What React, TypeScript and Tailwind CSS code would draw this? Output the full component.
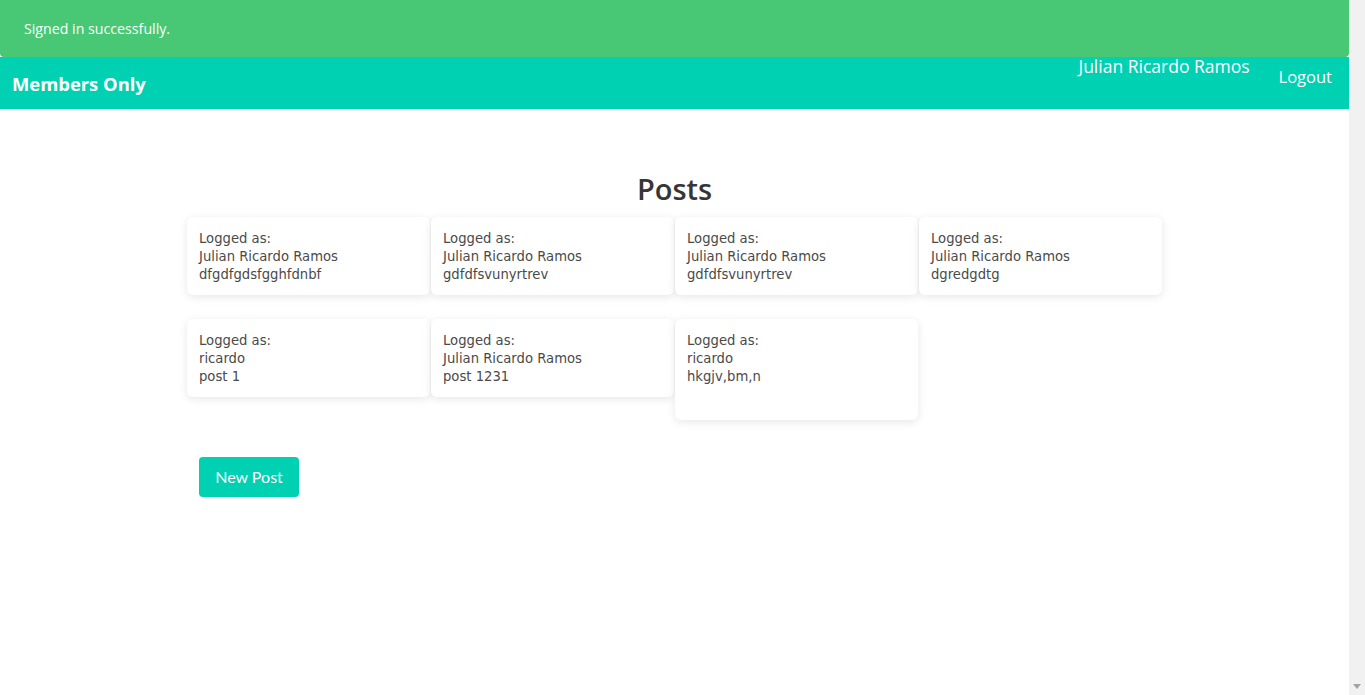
import React from 'react';

type Post = { author: string; body: string; tall?: boolean };

const rows: Post[][] = [
  [
    { author: 'Julian Ricardo Ramos', body: 'dfgdfgdsfgghfdnbf' },
    { author: 'Julian Ricardo Ramos', body: 'gdfdfsvunyrtrev' },
    { author: 'Julian Ricardo Ramos', body: 'gdfdfsvunyrtrev' },
    { author: 'Julian Ricardo Ramos', body: 'dgredgdtg' },
  ],
  [
    { author: 'ricardo', body: 'post 1' },
    { author: 'Julian Ricardo Ramos', body: 'post 1231' },
    { author: 'ricardo', body: 'hkgjv,bm,n', tall: true },
  ],
];

const PostCard: React.FC<{ post: Post }> = ({ post }) => (
  <div
    className={`w-[243px] rounded-md bg-white px-3 pt-[13px] text-[13.2px] leading-[18px] text-[#4a4a4a] shadow-[0_2px_8px_rgba(10,10,10,0.1)] ${
      post.tall ? 'h-[101px]' : 'h-[78px]'
    }`}
    style={{ fontFamily: '"DejaVu Sans", Verdana, sans-serif' }}
  >
    <div>Logged as:</div>
    <div>{post.author}</div>
    <div>{post.body}</div>
  </div>
);

export default function App() {
  return (
    <div className="flex min-h-[695px] w-full bg-white">
      <div className="w-[1349px] shrink-0" style={{ fontFamily: '"Open Sans", "Noto Sans", sans-serif' }}>
        {/* Flash notice */}
        <div className="flex h-[57px] items-center rounded-b-[4px] bg-[#48c774] pl-6 text-[14.2px] text-white">
          Signed in successfully.
        </div>

        {/* Navbar */}
        <nav className="flex h-[52px] items-stretch justify-between bg-[#00d1b2] text-white">
          <div className="flex items-center pl-3 pt-[2px] text-[18.4px] font-bold">Members Only</div>
          <div className="flex items-start">
            <div className="text-[17.5px] leading-[18px]">Julian Ricardo Ramos</div>
            <div className="ml-[29px] mr-[17px] mt-[10px] text-[16.5px] leading-[20px]">Logout</div>
          </div>
        </nav>

        {/* Posts */}
        <section className="pt-[60px]">
          <div className="mx-auto w-[975px]">
            <h1 className="text-center text-[29px] font-semibold leading-[40px] text-[#363636]">Posts</h1>
            <div className="mt-[8px] flex flex-col gap-6">
              {rows.map((row, i) => (
                <div key={i} className="flex items-start gap-px">
                  {row.map((p, j) => (
                    <PostCard key={j} post={p} />
                  ))}
                </div>
              ))}
            </div>
            <div className="mt-[37px] px-3">
              <button
                className="h-10 w-[100px] rounded-[4px] bg-[#00d1b2] text-[16px] text-white"
                style={{ fontFamily: 'Lato, sans-serif' }}
              >
                New Post
              </button>
            </div>
          </div>
        </section>
      </div>

      {/* Scrollbar strip */}
      <div className="flex w-4 shrink-0 flex-col justify-end bg-[#f1f1f1] pb-[6px]">
        <div className="mx-auto h-0 w-0 border-x-[4px] border-t-[5px] border-x-transparent border-t-[#a3a3a3]" />
      </div>
    </div>
  );
}
